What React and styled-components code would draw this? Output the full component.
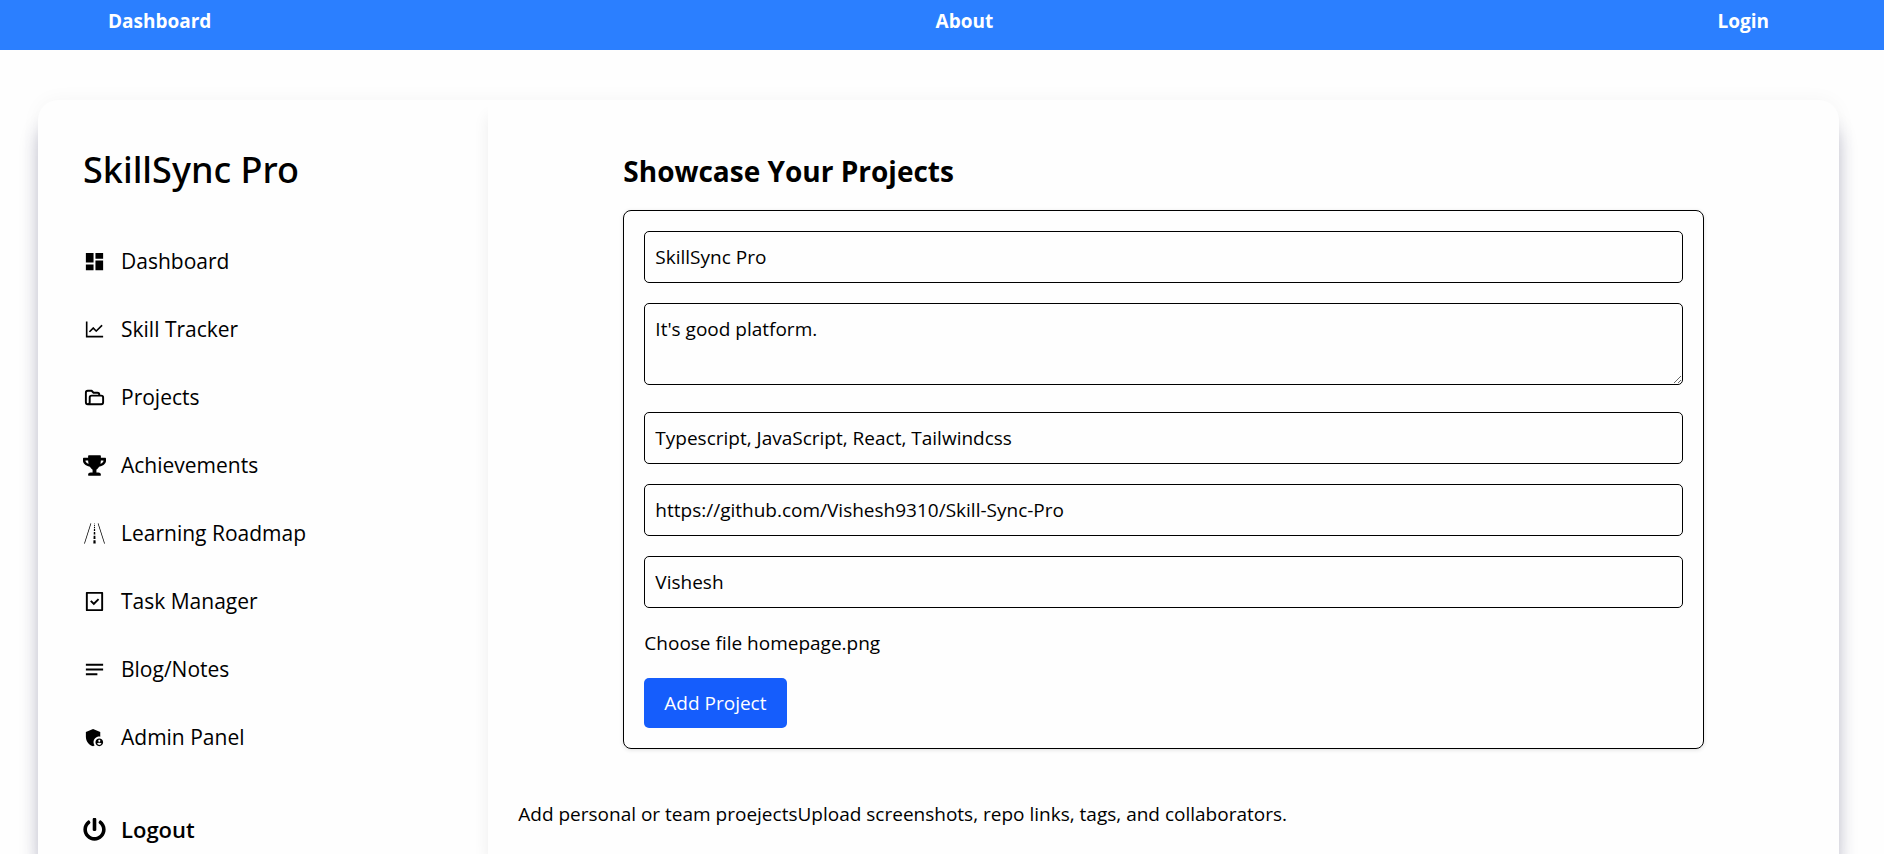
import React from 'react';
import styled, { createGlobalStyle } from 'styled-components';
import { MdDashboard, MdNotes, MdAdminPanelSettings } from 'react-icons/md';
import { AiOutlineLineChart } from 'react-icons/ai';
import { HiOutlineFolderOpen } from 'react-icons/hi';
import { FaTrophy, FaPowerOff } from 'react-icons/fa';
import { GiRoad } from 'react-icons/gi';
import { RiTaskLine } from 'react-icons/ri';

const GlobalStyle = createGlobalStyle`
  *, *::before, *::after { box-sizing: border-box; }
  body {
    margin: 0;
    background: #fefefe;
    color: #000;
    font: 400 19px/30px "Segoe UI", "Open Sans", sans-serif;
  }
  h1, h2, p, ul { margin: 0; padding: 0; }
  input, textarea, button { font: inherit; color: inherit; }
  a { color: inherit; text-decoration: none; }
`;

const Page = styled.div`
  display: flex;
  flex-direction: column;
  min-height: 100vh;
  overflow: hidden;
`;

const TopBar = styled.nav`
  display: flex;
  justify-content: space-between;
  height: 50px;
  padding: 6px 115px 0 108px;
  background: #2b7fff;
  color: #fff;
  font-weight: 700;
`;

const Card = styled.div`
  display: grid;
  grid-template-columns: 1fr 3fr;
  flex: 1;
  margin: 50px 45px 0 38px;
  border-radius: 20px 20px 0 0;
  background: #fefefe;
  box-shadow: 0 0 20px rgba(0, 0, 0, 0.04), 0 24px 18px rgba(40, 40, 90, 0.28);
`;

const Sidebar = styled.aside`
  padding: 44px 45px 10px;
`;

const Brand = styled.h1`
  font-family: "Segoe UI", "Noto Sans", sans-serif;
  font-size: 36px;
  line-height: 52px;
  font-weight: 500;
`;

const Menu = styled.ul`
  display: flex;
  flex-direction: column;
  gap: 40px;
  margin-top: 51px;
  list-style: none;
`;

const MenuLink = styled.a`
  display: flex;
  align-items: center;
  gap: 15px;
  font-size: 21px;
  line-height: 28px;

  svg { flex: none; width: 23px; height: 23px; }
`;

const LogoutButton = styled.button`
  display: flex;
  align-items: center;
  gap: 15px;
  margin-top: 64px;
  padding: 0;
  border: 0;
  background: none;
  font-size: 22px;
  line-height: 28px;
  font-weight: 600;

  svg { flex: none; width: 23px; height: 23px; }
`;

const Main = styled.main`
  border-top-right-radius: 20px;
  box-shadow: -4px 12px 16px -4px rgba(0, 0, 0, 0.07);
  clip-path: inset(0 0 0 -30px);
`;

const Projects = styled.section`
  width: 80%;
  margin: 0 auto;
  padding: 50px 0;
`;

const Heading = styled.h2`
  margin-bottom: 18px;
  font-size: 28px;
  line-height: 42px;
  font-weight: 700;
`;

const Form = styled.form`
  display: flex;
  flex-direction: column;
  align-items: flex-start;
  gap: 20px;
  padding: 20px;
  border: 1px solid #000;
  border-radius: 8px;
  box-shadow: 0 1px 4px rgba(0, 0, 0, 0.12);
`;

const TextField = styled.input`
  display: block;
  width: 100%;
  height: 52px;
  padding: 10px;
  border: 1px solid #000;
  border-radius: 5px;
  background: transparent;
`;

const TextArea = styled.textarea`
  display: block;
  width: 100%;
  height: 82px;
  margin-bottom: 7px;
  padding: 10px;
  border: 1px solid #000;
  border-radius: 5px;
  background: transparent;
  resize: vertical;
`;

const FileLabel = styled.label`
  cursor: pointer;
`;

const FileInput = styled.input`
  position: absolute;
  width: 1px;
  height: 1px;
  opacity: 0;
`;

const SubmitButton = styled.button`
  padding: 10px 20px;
  border: 0;
  border-radius: 5px;
  background: #155dfc;
  color: #fff;
`;

const Note = styled.p`
  padding: 0 30px;
`;

const menu = [
  { label: 'Dashboard', Icon: MdDashboard },
  { label: 'Skill Tracker', Icon: AiOutlineLineChart },
  { label: 'Projects', Icon: HiOutlineFolderOpen },
  { label: 'Achievements', Icon: FaTrophy },
  { label: 'Learning Roadmap', Icon: GiRoad },
  { label: 'Task Manager', Icon: RiTaskLine },
  { label: 'Blog/Notes', Icon: MdNotes },
  { label: 'Admin Panel', Icon: MdAdminPanelSettings },
];

export default function App() {
  return (
    <>
      <GlobalStyle />
      <Page>
        <TopBar>
          <a href="#dashboard">Dashboard</a>
          <a href="#about">About</a>
          <a href="#login">Login</a>
        </TopBar>
        <Card>
          <Sidebar>
            <Brand>SkillSync Pro</Brand>
            <Menu>
              {menu.map(({ label, Icon }) => (
                <li key={label}>
                  <MenuLink href="#menu">
                    <Icon aria-hidden="true" />
                    {label}
                  </MenuLink>
                </li>
              ))}
            </Menu>
            <LogoutButton type="button">
              <FaPowerOff aria-hidden="true" />
              Logout
            </LogoutButton>
          </Sidebar>
          <Main>
            <Projects>
              <Heading>Showcase Your Projects</Heading>
              <Form onSubmit={(e) => e.preventDefault()}>
                <TextField aria-label="Project title" defaultValue="SkillSync Pro" />
                <TextArea aria-label="Description" defaultValue="It's good platform." />
                <TextField aria-label="Tags" defaultValue="Typescript, JavaScript, React, Tailwindcss" />
                <TextField aria-label="Repository link" defaultValue="https://github.com/Vishesh9310/Skill-Sync-Pro" />
                <TextField aria-label="Collaborators" defaultValue="Vishesh" />
                <FileLabel>
                  <FileInput type="file" />
                  Choose file homepage.png
                </FileLabel>
                <SubmitButton type="submit">Add Project</SubmitButton>
              </Form>
            </Projects>
            <Note>
              Add personal or team proejectsUpload screenshots, repo links, tags, and collaborators.
            </Note>
          </Main>
        </Card>
      </Page>
    </>
  );
}
